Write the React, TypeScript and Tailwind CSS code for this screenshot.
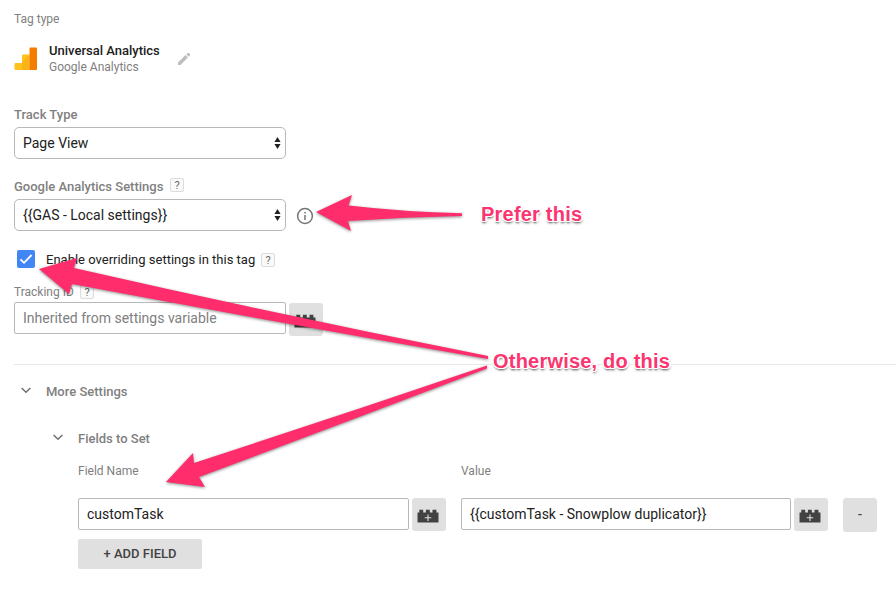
import React from 'react';

function Help({ className = '' }: { className?: string }) {
  return (
    <span
      className={`flex h-[14px] w-[14px] shrink-0 items-center justify-center rounded-[2px] border border-[#dcdcdc] bg-[#fafafa] text-[11px] leading-none text-[#666] ${className}`}
    >
      ?
    </span>
  );
}

function SelectBox({ value }: { value: string }) {
  return (
    <div className="flex h-8 w-[272px] shrink-0 items-center justify-between rounded-[5px] border border-[#b8b8b8] bg-white pr-[4px] pl-2 text-[14px] text-[#212121]">
      <span>{value}</span>
      <svg width="7" height="14" viewBox="0 0 7 14" fill="#222">
        <path d="M3.5 1 6.6 6H.4ZM3.5 13 .4 8h6.2Z" />
      </svg>
    </div>
  );
}

function BrickButton({ plus = true }: { plus?: boolean }) {
  return (
    <button className="flex h-[33px] w-[34px] shrink-0 items-center justify-center rounded-[3px] bg-[#e0e0e0]">
      <svg width="22" height="14" viewBox="0 0 22 14" className="mt-[2px] mr-[2px]">
        <path
          d="M.5 3.5H2.3V.8H6.2V3.5H8.9V.8H12.8V3.5H15.5V.8H19.4V3.5H21.5V13.5H.5Z"
          fill="#424242"
        />
        {plus && <path d="M11 5.5V12M7.7 8.8H14.3" stroke="#e0e0e0" strokeWidth="1.1" />}
      </svg>
    </button>
  );
}

function Chevron() {
  return (
    <svg width="10" height="7" viewBox="0 0 10 7" fill="none" stroke="#707070" strokeWidth="1.5" className="mb-[4px]">
      <path d="m.6 1 4.4 4.3L9.4 1" />
    </svg>
  );
}

const outline =
  '[text-shadow:1px_0_0_#fff,-1px_0_0_#fff,0_1px_0_#fff,0_-1px_0_#fff,1px_1px_0_#fff,-1px_-1px_0_#fff,1px_-1px_0_#fff,-1px_1px_0_#fff,2px_0_0_#fff,-2px_0_0_#fff,0_2px_2px_rgba(0,0,0,0.5),1px_2px_3px_rgba(0,0,0,0.35)]';

function Annotations() {
  return (
    <div className="pointer-events-none absolute inset-0 font-['Liberation_Sans',Helvetica,sans-serif] text-[20px] leading-6 font-bold tracking-[0.21px] text-[#fb3570]">
      <svg
        width="896"
        height="594"
        viewBox="0 0 896 594"
        fill="#ff2d6b"
        className="absolute inset-0 [filter:drop-shadow(0_1.5px_1.5px_rgba(0,0,0,0.45))]"
      >
        <path d="M316 212 352 195 348.5 205.5Q405 212 462 213.2V216Q405 217 348 221L351 231Z" />
        <path d="M39 269 77 258 74 268 Q280 315 488 356V359Q280 323 72 284L69 294Z" />
        <path d="M166 482 193 453 194 463Q340 415.5 487 365.5V368.5Q345 422.5 199 477L205 487Z" />
      </svg>
      <span className={`absolute top-[202px] left-[481px] whitespace-nowrap ${outline}`}>Prefer this</span>
      <span className={`absolute top-[349px] left-[493px] whitespace-nowrap ${outline}`}>Otherwise, do this</span>
    </div>
  );
}

export default function App() {
  return (
    <main className="relative flex h-[594px] w-[896px] flex-col overflow-hidden bg-white pl-[14px] font-['Roboto',sans-serif] text-[#808080]">
      <div className="mt-[11px] h-4 text-[12px] leading-4">Tag type</div>

      <div className="mt-[15px] flex h-[33px] items-center">
        <svg width="24" height="24" viewBox="0 0 24 24" className="mt-[1px]">
          <path d="M1.5 16H8V8.5Q8 7.5 9 7.5H15.5V23H1.5Q.5 23 .5 22V17Q.5 16 1.5 16Z" fill="#ffc21c" />
          <path d="M8 16V23H15.5V7.5Z" fill="#fbb416" />
          <path d="M16.5.5H22Q23 .5 23 1.5V22Q23 23 22 23H15.5V1.5Q15.5.5 16.5.5Z" fill="#f57c00" />
        </svg>
        <div className="ml-[11px] w-[111px] whitespace-nowrap">
          <div className="text-[13px] leading-[17px] font-medium text-[#212121]">Universal Analytics</div>
          <div className="text-[12px] leading-4">Google Analytics</div>
        </div>
        <svg width="14" height="14" viewBox="0 0 14 14" fill="#bdbdbd" className="ml-[17px]">
          <path d="M1 10.6 8.5 3.1 10.9 5.5 3.4 13H1ZM9.3 2.3 10.7.9Q11.2.5 11.7.9L13.1 2.3Q13.5 2.8 13.1 3.3L11.7 4.7Z" />
        </svg>
      </div>

      <div className="mt-[31px] h-[21px] text-[13px] leading-[17px] font-medium">Track Type</div>
      <SelectBox value="Page View" />

      <div className="mt-[19px] flex h-[21px] text-[13px] leading-[18px] font-medium">
        <span className="w-[149px] whitespace-nowrap">Google Analytics Settings</span>
        <Help className="ml-[7px] font-normal" />
      </div>
      <div className="flex items-center">
        <SelectBox value="{{GAS - Local settings}}" />
        <svg width="18" height="18" viewBox="0 0 18 18" fill="none" stroke="#757575" strokeWidth="1.5" className="mt-[2px] ml-[10px]">
          <circle cx="9" cy="9" r="7.4" />
          <path d="M9 8V13M9 5V6.6" />
        </svg>
      </div>

      <div className="mt-[19px] flex h-[18px] items-center pl-[3px] text-[13px] text-[#212121]">
        <span className="flex h-[18px] w-[18px] items-center justify-center rounded-[2px] bg-[#4285f4]">
          <svg width="14" height="12" viewBox="0 0 14 12" fill="none" stroke="white" strokeWidth="1.8">
            <path d="m1.5 6.3 3.5 3.5L12.6 2" />
          </svg>
        </span>
        <span className="ml-[11px] w-[209px] pt-px whitespace-nowrap">Enable overriding settings in this tag</span>
        <Help className="mt-[2px] ml-[6px]" />
      </div>

      <div className="mt-[17px] flex h-[17px] text-[12px] leading-[15px]">
        <span className="w-[60px] whitespace-nowrap">Tracking ID</span>
        <Help className="ml-[6px]" />
      </div>
      <div className="flex h-[34px] gap-[3px]">
        <div className="flex h-8 w-[272px] items-center rounded-[2px] border border-[#b8b8b8] pl-2 text-[14px]">
          Inherited from settings variable
        </div>
        <div className="pt-px">
          <BrickButton plus={false} />
        </div>
      </div>

      <div className="mt-[28px] h-px shrink-0 bg-[#e8e8e8]" />

      <section className="flex flex-col pl-[7px] text-[13px] font-medium">
        <div className="mt-[17px] flex h-5 items-center">
          <Chevron />
          <span className="ml-[15px]">More Settings</span>
        </div>
        <div className="mt-[27px] flex h-5 items-center pl-8">
          <Chevron />
          <span className="ml-[15px]">Fields to Set</span>
        </div>
      </section>

      <section className="flex flex-col pl-16">
        <div className="mt-[14px] flex h-4 text-[12px] leading-4">
          <span className="w-[383px]">Field Name</span>
          <span>Value</span>
        </div>
        <div className="mt-[19px] flex h-[34px] text-[14px] text-[#212121]">
          <div className="flex h-8 w-[331px] items-center rounded-[2px] border border-[#b8b8b8] pl-2">customTask</div>
          <div className="ml-[3px]">
            <BrickButton />
          </div>
          <div className="ml-[15px] flex h-8 w-[330px] items-center rounded-[2px] border border-[#b8b8b8] pl-2">
            {'{{customTask - Snowplow duplicator}}'}
          </div>
          <div className="ml-[3px]">
            <BrickButton />
          </div>
          <button className="ml-[15px] h-[34px] w-[34px] rounded-[3px] bg-[#e0e0e0] text-[13px] font-medium text-[#444]">-</button>
        </div>
        <button className="mt-[7px] h-[30px] w-[124px] rounded-[2px] bg-[#e0e0e0] text-[13px] font-medium text-[#424242]">
          + ADD FIELD
        </button>
      </section>

      <Annotations />
    </main>
  );
}
